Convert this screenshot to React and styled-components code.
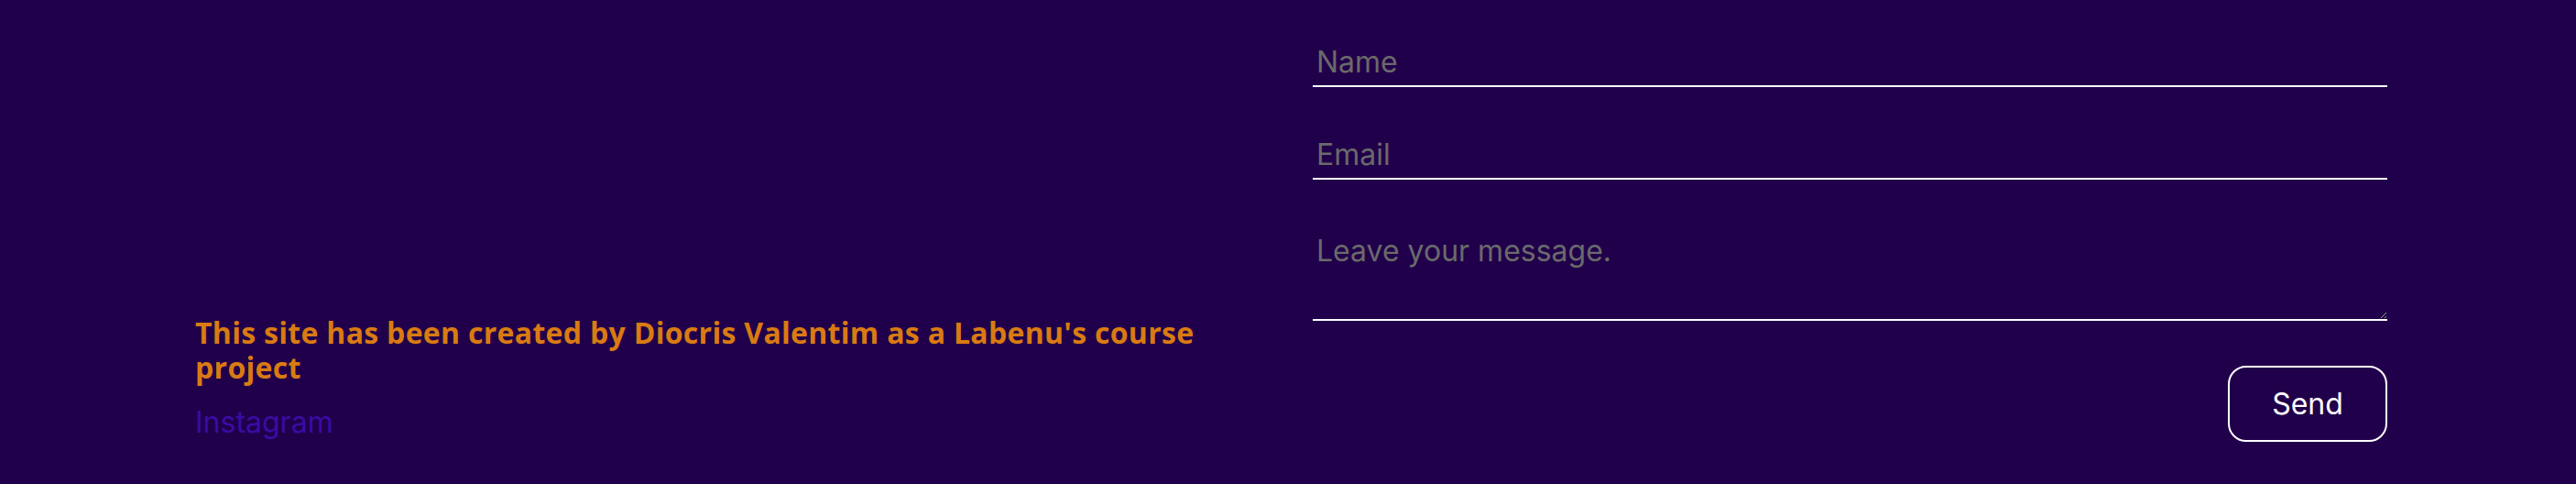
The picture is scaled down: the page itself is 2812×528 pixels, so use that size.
import React from "react";
import styled, { createGlobalStyle } from "styled-components";

const GlobalStyle = createGlobalStyle`
  html, body {
    margin: 0;
    padding: 0;
    background-color: #21004b;
  }
  * {
    box-sizing: border-box;
  }
`;

export default function App() {
  return (
    <>
      <GlobalStyle />
      <Footer>
        <div className="credits">
          <h3>
            This site has been created by Diocris Valentim as a Labenu's course
            project
          </h3>
          <a href="#instagram">Instagram</a>
        </div>
        <form className="contact" onSubmit={(e) => e.preventDefault()}>
          <input type="text" placeholder="Name" />
          <input type="email" placeholder="Email" />
          <textarea placeholder="Leave your message." />
          <button type="submit">Send</button>
        </form>
      </Footer>
    </>
  );
}

const Footer = styled.footer`
  display: grid;
  grid-template-columns: 1fr 1173px;
  column-gap: 47px;
  align-items: end;
  min-height: 528px;
  padding: 43px 206px 46px 213px;
  background-color: #21004b;
  font-family: Inter, "Liberation Sans", sans-serif;
  .credits {
    display: flex;
    flex-direction: column;
    align-items: flex-start;
    gap: 22px;
    padding-bottom: 2px;
    h3 {
      margin: 0;
      max-width: 1150px;
      font-family: "Open Sans", "Liberation Sans", sans-serif;
      font-weight: 700;
      font-size: 32px;
      letter-spacing: 0.3px;
      line-height: 38px;
      color: #d97b12;
    }
    a {
      font-size: 32px;
      line-height: 38px;
      color: #3a0ca3;
      text-decoration: none;
    }
  }
  .contact {
    display: flex;
    flex-direction: column;
    gap: 51px;
    input,
    textarea {
      width: 100%;
      padding: 4px 4px 6px;
      border: none;
      border-bottom: 2px solid #ffffff;
      background: transparent;
      color: #ffffff;
      font-family: Inter, "Liberation Sans", sans-serif;
      font-size: 32px;
      line-height: 38px;
      outline: none;
      &::placeholder {
        color: #6a6a6a;
      }
    }
    textarea {
      height: 101px;
      margin-top: 2px;
      padding-top: 6px;
      resize: vertical;
    }
    button {
      align-self: flex-end;
      width: 174px;
      height: 83px;
      margin-top: -2px;
      border: 2px solid #ffffff;
      border-radius: 20px;
      background: transparent;
      color: #ffffff;
      font-family: Inter, "Liberation Sans", sans-serif;
      font-size: 32px;
      cursor: pointer;
    }
  }
`;
